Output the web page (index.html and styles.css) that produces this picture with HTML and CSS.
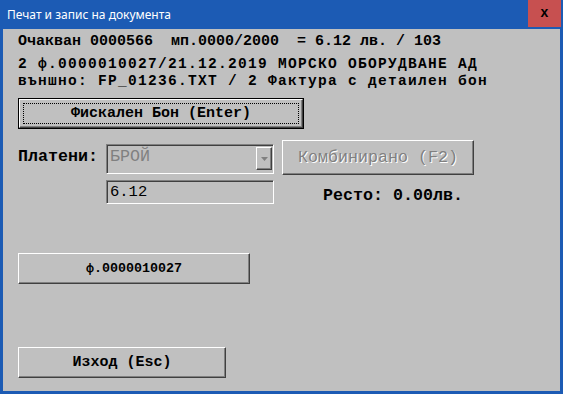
FILE: index.html
```html
<!DOCTYPE html>
<html lang="bg">
<head>
  <meta charset="UTF-8">
  <title>Печат и запис на документа</title>
  <link rel="stylesheet" href="styles.css">
</head>
<body>
  <div class="window">
    <div class="titlebar">
      <span class="title">Печат и запис на документа</span>
      <div class="close">x</div>
    </div>

    <div class="client">
      <div class="info-small">Очакван 0000566  мп.0000/2000  = 6.12 лв. / 103</div>
      <div class="info-big first">2 ф.0000010027/21.12.2019 МОРСКО ОБОРУДВАНЕ АД</div>
      <div class="info-big">външно: FP_01236.TXT / 2 Фактура с детаилен бон</div>

      <button class="btn btn-default btn-fiscal"><span class="focus">Фискален Бон (Enter)</span></button>

      <div class="pay-row">
        <span class="label">Платени:</span>
        <div class="combo">
          <span class="combo-text">БРОЙ</span>
          <span class="combo-arrow">
            <svg width="7" height="4" viewBox="0 0 7 4"><path d="M0 0h7L3.5 4z" fill="#808080"/></svg>
          </span>
        </div>
        <button class="btn btn-combined" disabled>Комбинирано (F2)</button>
      </div>

      <div class="sum-row">
        <div class="edit">6.12</div>
        <span class="change">Ресто: 0.00лв.</span>
      </div>

      <button class="btn btn-invoice">ф.0000010027</button>
      <button class="btn btn-exit">Изход (Esc)</button>
    </div>
  </div>
</body>
</html>
```

FILE: styles.css
```css
* {
  box-sizing: border-box;
}
body {
  margin: 0;
  width: 563px;
  height: 394px;
  overflow: hidden;
  font-family: 'Liberation Mono', 'Courier New', monospace;
  color: #000;
}
.window {
  width: 563px;
  height: 394px;
  background: #1c5bb4;
  padding: 0 3px 3px 3px;
  display: flex;
  flex-direction: column;
}
.titlebar {
  height: 29px;
  display: flex;
  align-items: flex-start;
  justify-content: space-between;
}
.title {
  font-family: 'Noto Sans', 'DejaVu Sans', sans-serif;
  font-size: 12px;
  color: #fff;
  padding: 6px 0 0 4px;
}
.close {
  width: 33px;
  height: 27px;
  background: #c75050;
  font-family: 'Liberation Sans', Arial, sans-serif;
  font-weight: bold;
  font-size: 14px;
  text-align: center;
  line-height: 25px;
  margin-right: -1px;
}
.client {
  flex: 1;
  background: #c0c0c0;
  padding: 4px 0 0 15px;
  display: flex;
  flex-direction: column;
  align-items: flex-start;
  white-space: pre;
  font-weight: bold;
}
.info-small {
  font-size: 15px;
  line-height: 18px;
}
.info-big {
  font-size: 14.5px;
  letter-spacing: 1.3px;
  line-height: 17px;
}
.info-big.first {
  margin-top: 5px;
}
.btn {
  font-family: inherit;
  font-weight: bold;
  color: #000;
  background: #c0c0c0;
  border: 1px solid;
  border-color: #fff #404040 #404040 #fff;
  box-shadow: inset -1px -1px #808080;
  padding: 0;
  height: 31px;
}
.btn-default {
  outline: 1px solid #000;
  outline-offset: 0;
}
.btn-fiscal {
  margin-top: 9px;
  margin-left: 1px;
  width: 284px;
  height: 29px;
  font-size: 15px;
  padding: 3px;
}
.focus {
  display: block;
  height: 100%;
  border: 1px dotted #000;
  line-height: 19px;
}
.pay-row {
  margin-top: 12px;
  display: flex;
  align-items: flex-start;
}
.label {
  width: 88px;
  font-size: 16.67px;
  line-height: 20px;
  margin-top: 7px;
}
.combo {
  margin-top: 4px;
  width: 168px;
  height: 30px;
  border: 1px solid;
  border-color: #808080 #fff #fff #808080;
  box-shadow: inset 1px 1px #404040;
  display: flex;
  align-items: flex-start;
  justify-content: space-between;
  padding: 2px 1px 0 2px;
}
.combo-text {
  font-size: 16.67px;
  line-height: 20px;
  color: #808080;
  font-weight: normal;
  padding-left: 1px;
}
.combo-arrow {
  width: 16px;
  height: 23px;
  border: 1px solid;
  border-color: #fff #404040 #404040 #fff;
  box-shadow: inset -1px -1px #808080;
  display: flex;
  align-items: center;
  justify-content: center;
}
.btn-combined {
  margin-left: 8px;
  width: 192px;
  height: 35px;
  font-size: 16.67px;
  color: #808080;
  font-weight: normal;
  text-shadow: 1px 1px #fff;
}
.sum-row {
  margin-top: 3px;
  display: flex;
  align-items: center;
}
.edit {
  margin-left: 88px;
  width: 168px;
  height: 24px;
  border: 1px solid;
  border-color: #808080 #fff #fff #808080;
  box-shadow: inset 1px 1px #404040;
  font-size: 15.5px;
  line-height: 20px;
  padding: 1px 0 0 3px;
  font-weight: normal;
}
.change {
  margin-left: 49px;
  margin-top: 8px;
  font-size: 16.67px;
}
.btn-invoice {
  margin-top: 48px;
  width: 232px;
  font-size: 13.33px;
}
.btn-exit {
  margin-top: 63px;
  width: 208px;
  font-size: 15px;
}
```
